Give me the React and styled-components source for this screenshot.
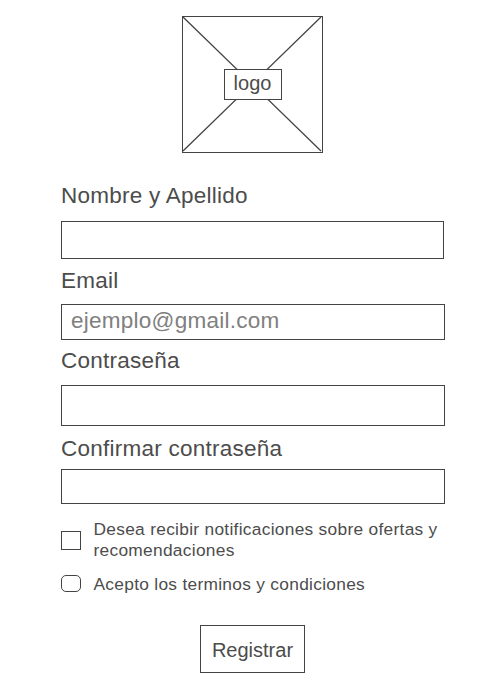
import React from "react";
import styled, { createGlobalStyle } from "styled-components";

const GlobalStyle = createGlobalStyle`
  * { box-sizing: border-box; }
  body { margin: 0; background: #fff; }
`;

const Form = styled.form`
  display: flex;
  flex-direction: column;
  width: 490px;
  height: 688px;
  padding: 16px 45px 0 61px;
  background: #fff;
  color: #4c4c4c;
  font-family: "Liberation Sans", Arial, sans-serif;
`;

const Logo = styled.div`
  display: grid;
  place-items: center;
  width: 141px;
  height: 137px;
  margin-left: 121px;
  margin-bottom: 30px;
  > * { grid-area: 1 / 1; }
`;

const Cross = styled.svg`
  display: block;
`;

const LogoText = styled.div`
  z-index: 1;
  width: 58px;
  height: 31px;
  border: 1px solid #444;
  background: #fff;
  font-size: 20px;
  line-height: 27px;
  text-align: center;
`;

const Label = styled.label`
  height: ${(p) => p.$height}px;
  font-size: 22.5px;
  line-height: 25px;
  letter-spacing: 0.25px;
  white-space: nowrap;
`;

const Input = styled.input`
  width: ${(p) => p.$width || 384}px;
  height: ${(p) => p.$height}px;
  margin: 0 0 ${(p) => p.$gap}px;
  padding: 0 9px 3px;
  border: 1px solid #444;
  border-radius: 0;
  background: #fff;
  font: 22.5px "Liberation Sans", Arial, sans-serif;
  letter-spacing: 0.25px;
  outline: none;
  &::placeholder { color: #808080; opacity: 1; }
`;

const Option = styled.label`
  display: flex;
  align-items: center;
  height: ${(p) => p.$height}px;
  margin-bottom: ${(p) => p.$gap}px;
  font-size: 17.33px;
  line-height: 21px;
  letter-spacing: 0.29px;
  white-space: nowrap;
`;

const OptionText = styled.span`
  padding-top: ${(p) => p.$drop || 0}px;
`;

const Check = styled.input`
  appearance: none;
  flex: none;
  width: 20px;
  height: ${(p) => p.$height}px;
  margin: 0 12.5px 0 0;
  border: 1px solid #444;
  border-radius: ${(p) => p.$radius}px;
`;

const Button = styled.button`
  width: 105px;
  height: 48px;
  margin: 0 0 0 139px;
  padding: 2px 0 0;
  border: 1px solid #444;
  background: #fff;
  color: #4c4c4c;
  font: 20px "Liberation Sans", Arial, sans-serif;
`;

export default function App() {
  return (
    <>
      <GlobalStyle />
      <Form>
        <Logo>
          <Cross width="141" height="137" fill="none" stroke="#444">
            <rect x="0.5" y="0.5" width="140" height="136" />
            <path d="M1 1 139 135M139 1 1 135" strokeWidth="1.3" />
          </Cross>
          <LogoText>logo</LogoText>
        </Logo>
        <Label htmlFor="name" $height={38}>Nombre y Apellido</Label>
        <Input id="name" $width={383} $height={38} $gap={9} />
        <Label htmlFor="email" $height={36}>Email</Label>
        <Input id="email" placeholder="ejemplo@gmail.com" $height={36} $gap={8} />
        <Label htmlFor="password" $height={37}>Contraseña</Label>
        <Input id="password" type="password" $height={41} $gap={10} />
        <Label htmlFor="confirm" $height={33}>Confirmar contraseña</Label>
        <Input id="confirm" type="password" $height={35} $gap={15} />
        <Option $height={42} $gap={12}>
          <Check type="checkbox" $height={19} $radius={0} />
          <OptionText>Desea recibir notificaciones sobre ofertas y<br />recomendaciones</OptionText>
        </Option>
        <Option $height={21} $gap={31}>
          <Check type="checkbox" $height={17} $radius={5} />
          <OptionText $drop={2}>Acepto los terminos y condiciones</OptionText>
        </Option>
        <Button type="button">Registrar</Button>
      </Form>
    </>
  );
}
